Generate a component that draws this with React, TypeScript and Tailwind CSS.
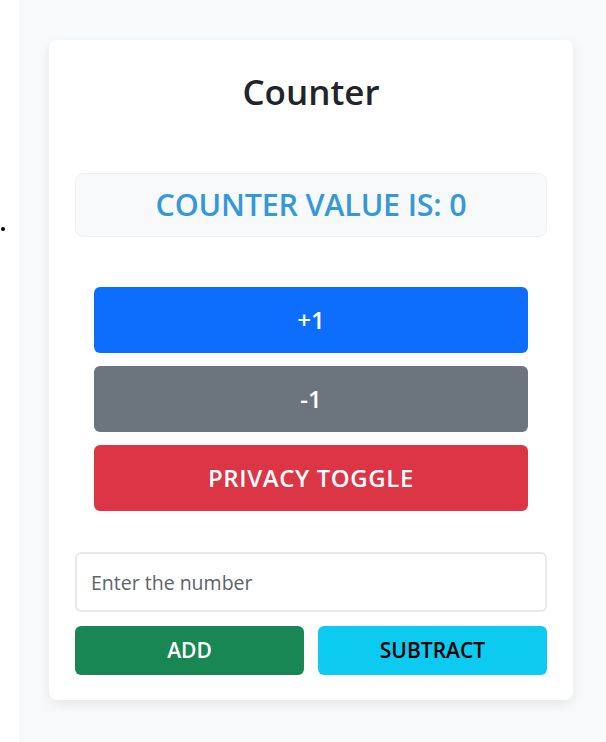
import React from "react";

export default function App() {
  return (
    <div className="flex min-h-screen w-full bg-white" style={{ fontFamily: '"Open Sans", "Noto Sans", sans-serif' }}>
      <div className="relative w-[19px] shrink-0 bg-white">
        <div className="absolute left-[1px] top-[227px] h-[4px] w-[4px] rounded-full bg-black" />
      </div>
      <div className="min-h-[742px] flex-1 bg-[#f8f9fa] pl-[30px] pr-[33px] pt-[40px]">
        <div className="w-[524px] rounded-[8px] bg-white px-[26px] pb-[25px] pt-[30px] shadow-[0_4px_12px_rgba(0,0,0,0.08)]">
          <h1 className="h-[44px] text-center text-[35px] font-semibold leading-[44px] text-[#212529]">Counter</h1>
          <div className="mt-[59px] flex h-[64px] items-center justify-center rounded-[8px] border border-[#eef0f2] bg-[#f8f9fa]">
            <span className="text-[30.5px] font-semibold tracking-[-0.2px] text-[#3498db]">COUNTER VALUE IS: 0</span>
          </div>
          <div className="mt-[50px] flex flex-col gap-[13px] px-[19px]">
            <button className="h-[66px] rounded-[6px] bg-[#0d6efd] text-[24px] font-semibold text-white">+1</button>
            <button className="h-[66px] rounded-[6px] bg-[#6c757d] text-[24px] font-semibold text-white">-1</button>
            <button className="h-[66px] rounded-[6px] bg-[#dc3545] text-[24px] font-semibold tracking-[0.6px] text-white">PRIVACY TOGGLE</button>
          </div>
          <input
            type="text"
            placeholder="Enter the number"
            className="mt-[41px] block h-[60px] w-full rounded-[6px] border-2 border-[#e6e9ec] bg-white px-[14px] text-[19.5px] text-[#212529] placeholder:text-[#5c636a] outline-none"
          />
          <div className="mt-[14px] grid grid-cols-2 gap-[14px]">
            <button className="h-[49px] rounded-[6px] bg-[#198754] text-[21px] font-semibold text-white">ADD</button>
            <button className="h-[49px] rounded-[6px] bg-[#0dcaf0] text-[21px] font-semibold text-black">SUBTRACT</button>
          </div>
        </div>
      </div>
    </div>
  );
}
